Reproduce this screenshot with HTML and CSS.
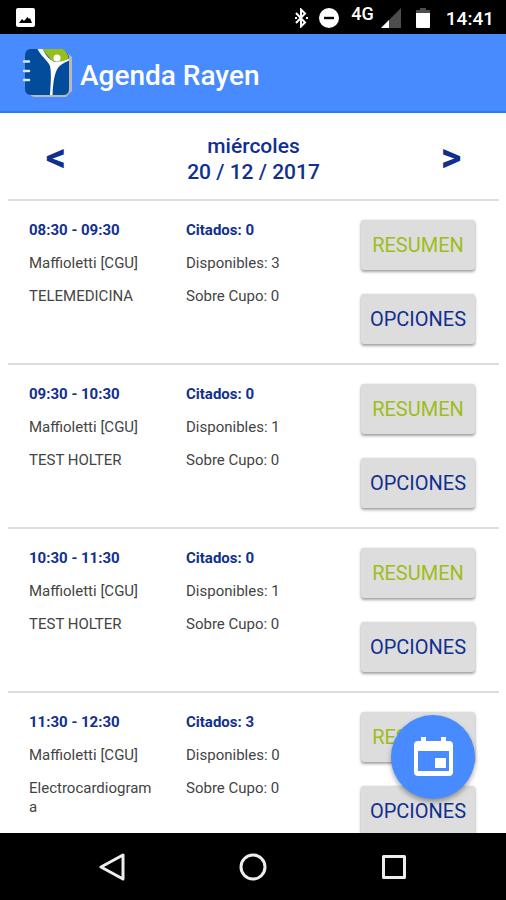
FILE: index.html
```html
<!DOCTYPE html>
<html lang="es">
<head>
<meta charset="utf-8">
<meta name="viewport" content="width=device-width, initial-scale=1">
<title>Agenda Rayen</title>
<link rel="stylesheet" href="styles.css">
</head>
<body>
<div class="status">
  <svg class="status-photo" width="20" height="20" viewBox="0 0 20 20"><rect width="19" height="19" rx="2" fill="#fff"/><path d="M3 15l3-4 2 2 3.500-4 1.500 2 1-1 2 5z" fill="#000"/></svg>
  <div class="status-right">
    <svg width="14" height="20" viewBox="0 0 14 20" fill="none" stroke="#fff" stroke-width="2"><path d="M1 5l9 9.500-4 4V1.500l4 4L1 15"/><path d="M12 9v2M1 9v2"/></svg>
    <svg class="status-dnd" width="20" height="20" viewBox="0 0 20 20"><circle cx="10" cy="10" r="10" fill="#fff"/><path d="M5 10h10" stroke="#000" stroke-width="2.400"/></svg>
    <span class="network">4G</span>
    <svg class="status-signal" width="20" height="20" viewBox="0 0 20 20"><path d="M20 0v20H0z" fill="#4d4d4d"/><path d="M8 12v8H0z" fill="#fff"/></svg>
    <svg class="status-battery" width="14" height="20" viewBox="0 0 14 20"><path d="M4 0h6v2h4v4H0V2h4z" fill="#4d4d4d"/><path d="M0 5h14v14q0 1-1 1H1q-1 0-1-1z" fill="#fff"/></svg>
    <time class="clock">14:41</time>
  </div>
</div>
<header class="appbar">
  <svg width="50" height="50" viewBox="0 0 50 50" aria-hidden="true">
    <path d="M8 2h33l8 7v34l-6 6H12q-4 0-6-4z" fill="#b9b9b9"/>
    <path d="M8 1h32q6 4 6 9v31q0 6-6 6H9q-7 0-7-6V8q0-7 6-7z" fill="#034b9b"/>
    <path d="M19 1h21q5 3 6 11l-8 2-9-1z" fill="#96bf1d"/>
    <path d="M14.500 1h5c2 4 6 10 10 12 5 2 11 0 16.500-2v1.500c-6 2.500-10 5-12 9-3 6-4 15-4.500 25.500H27c.8-12 1.500-22 0-29C25 13 18 8 14.500 1z" fill="#fff"/>
    <circle cx="34" cy="10" r="3.500" fill="#fff"/>
    <path d="M1 13.500h5M1 23h5M1 32h5" stroke="#dce8f7" stroke-width="2.500" stroke-linecap="round"/>
  </svg>
  <h1>Agenda Rayen</h1>
</header>
<main class="content">
  <nav class="daybar" aria-label="Día">
    <button class="arrow" type="button">&lt;</button>
    <h2>miércoles<br>20 / 12 / 2017</h2>
    <button class="arrow" type="button">&gt;</button>
  </nav>
  <section class="slot">
    <div class="info"><p class="strong">08:30 - 09:30</p><p>Maffioletti [CGU]</p><p>TELEMEDICINA</p></div>
    <div class="info"><p class="strong">Citados: 0</p><p>Disponibles: 3</p><p>Sobre Cupo: 0</p></div>
    <div class="actions"><button class="btn summary" type="button">RESUMEN</button><button class="btn" type="button">OPCIONES</button></div>
  </section>
  <section class="slot">
    <div class="info"><p class="strong">09:30 - 10:30</p><p>Maffioletti [CGU]</p><p>TEST HOLTER</p></div>
    <div class="info"><p class="strong">Citados: 0</p><p>Disponibles: 1</p><p>Sobre Cupo: 0</p></div>
    <div class="actions"><button class="btn summary" type="button">RESUMEN</button><button class="btn" type="button">OPCIONES</button></div>
  </section>
  <section class="slot">
    <div class="info"><p class="strong">10:30 - 11:30</p><p>Maffioletti [CGU]</p><p>TEST HOLTER</p></div>
    <div class="info"><p class="strong">Citados: 0</p><p>Disponibles: 1</p><p>Sobre Cupo: 0</p></div>
    <div class="actions"><button class="btn summary" type="button">RESUMEN</button><button class="btn" type="button">OPCIONES</button></div>
  </section>
  <section class="slot">
    <div class="info"><p class="strong">11:30 - 12:30</p><p>Maffioletti [CGU]</p><p>Electrocardiograma</p></div>
    <div class="info"><p class="strong">Citados: 3</p><p>Disponibles: 0</p><p>Sobre Cupo: 0</p></div>
    <div class="actions"><button class="btn summary" type="button">RESUMEN</button><button class="btn" type="button">OPCIONES</button></div>
  </section>
  <button class="fab" type="button" aria-label="Calendario">
    <svg width="40" height="40" viewBox="0 0 40 40"><path fill="#fff" fill-rule="evenodd" d="M8 0h5v4h15V0h5v4h3q4 0 4 4v27q0 4-4 4H5q-4 0-4-4V8q0-4 4-4h3zM5 14v20h31V14z"/><path d="M22 21h11v10H22z" fill="#fff"/></svg>
  </button>
</main>
<footer class="navbar">
  <button type="button" aria-label="Atrás"><svg width="28" height="28" viewBox="0 0 28 28"><path d="M25 2v24L3 14z"/></svg></button>
  <button type="button" aria-label="Inicio"><svg width="28" height="28" viewBox="0 0 28 28"><circle cx="14" cy="14" r="12"/></svg></button>
  <button type="button" aria-label="Recientes"><svg width="28" height="28" viewBox="0 0 28 28"><path d="M3.500 3.500h21v21h-21z"/></svg></button>
</footer>
</body>
</html>
```
FILE: styles.css
```css
* { box-sizing: border-box; }

body {
  margin: 0;
  height: 100vh;
  display: flex;
  flex-direction: column;
  overflow: hidden;
  background: #fff;
  color: #444;
  font-family: Roboto, "Liberation Sans", sans-serif;
  font-size: 15px;
  line-height: 19px;
}

h1, h2, p { margin: 0; }

svg { display: block; flex: none; }

button {
  border: 0;
  padding: 0;
  background: none;
  font-family: inherit;
  cursor: pointer;
}

.status {
  flex: none;
  height: 34px;
  padding: 2px 12px 0 16px;
  display: flex;
  justify-content: space-between;
  align-items: center;
  background: #000;
  color: #fff;
}

.status-right { display: flex; align-items: center; }
.status-dnd { margin-left: 10px; }
.network {
  margin: 0 7px 0 12px;
  padding-bottom: 10px;
  font-size: 18px;
  font-weight: 500;
}
.status-battery { margin: 0 16px 0 15px; }
.clock { font-size: 19px; font-weight: 500; }

.appbar {
  flex: none;
  height: 79px;
  padding: 0 23px;
  display: flex;
  align-items: center;
  gap: 7px;
  background: #488aff;
  border-bottom: 2px solid #2a7de1;
  color: #fff;
}

.appbar h1 {
  padding-top: 6px;
  font-size: 28px;
  line-height: 32px;
  font-weight: 500;
}

.content {
  position: relative;
  flex: 1;
  min-height: 0;
  padding: 0 7px 0 8px;
  overflow: hidden;
}

.daybar {
  height: 86px;
  padding: 6px 34px 0;
  display: flex;
  align-items: center;
  justify-content: space-between;
  color: #112f8f;
}

.daybar h2 {
  font-size: 21px;
  line-height: 26px;
  font-weight: 500;
  text-align: center;
}

.arrow {
  width: 28px;
  color: #112f8f;
  font-size: 40px;
  line-height: 32px;
  padding-bottom: 2px;
  font-weight: 700;
}

.slot {
  min-height: 164px;
  padding: 19px 24px 19px 21px;
  border-top: 2px solid #ddd;
  display: grid;
  grid-template-columns: 157fr 175fr 114px;
}

.info {
  display: flex;
  flex-direction: column;
  gap: 14px;
  padding: 1px 29px 0 0;
  overflow-wrap: anywhere;
}

.strong { color: #112f8f; font-weight: 700; }

.actions {
  display: flex;
  flex-direction: column;
  gap: 24px;
}

.btn {
  height: 50px;
  border-radius: 3px;
  background: #ddd;
  box-shadow: 0 2px 3px rgba(0, 0, 0, 0.35), 0 0 2px rgba(0, 0, 0, 0.15);
  color: #112f8f;
  font-size: 20px;
  font-weight: 400;
}

.summary { color: #9dbd1c; }

.fab {
  position: absolute;
  right: 31px;
  bottom: 34px;
  width: 84px;
  height: 84px;
  border-radius: 50%;
  display: grid;
  place-items: center;
  background: #488aff;
  box-shadow: 0 3px 5px rgba(0, 0, 0, 0.35);
}

.navbar {
  flex: none;
  height: 67px;
  display: grid;
  grid-template-columns: repeat(3, 141px);
  justify-content: center;
  background: #000;
}

.navbar button { display: grid; place-items: center; }

.navbar svg {
  fill: none;
  stroke: #eee;
  stroke-width: 3;
  stroke-linejoin: round;
}
```
